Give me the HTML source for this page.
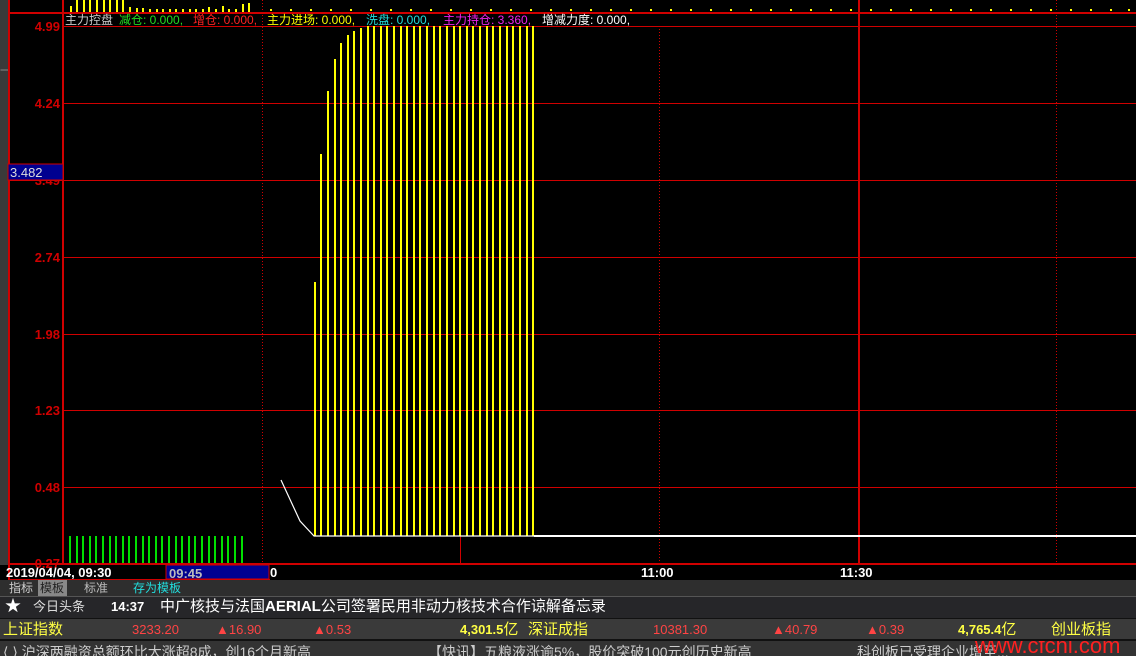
<!DOCTYPE html>
<html><head><meta charset="utf-8"><style>
*{margin:0;padding:0;box-sizing:border-box}
body{width:1136px;height:656px;background:#000;overflow:hidden;font-family:"Liberation Sans","Noto Sans CJK SC",sans-serif;position:relative}
.abs{position:absolute;white-space:nowrap}
.row{position:absolute;left:0;width:1136px}
</style></head><body>
<svg class="abs" style="left:0;top:0" width="1136" height="580" xmlns="http://www.w3.org/2000/svg">
<rect x="0" y="0" width="8" height="565" fill="#3a3a3a"/>
<line x1="0.5" y1="70" x2="8" y2="70" stroke="#888"/>
<g fill="#d00000" shape-rendering="crispEdges">
<rect x="8" y="12" width="1128" height="2"/>
<rect x="8" y="0" width="2" height="580"/>
<rect x="62" y="0" width="2" height="565"/>
<rect x="63" y="26" width="1073" height="1"/>
<rect x="63" y="103" width="1073" height="1"/>
<rect x="8" y="180" width="1128" height="1"/>
<rect x="63" y="257" width="1073" height="1"/>
<rect x="63" y="334" width="1073" height="1"/>
<rect x="63" y="410" width="1073" height="1"/>
<rect x="63" y="487" width="1073" height="1"/>
<rect x="8" y="563" width="1128" height="2"/>
<rect x="460" y="26" width="1" height="538"/>
<rect x="858" y="0" width="2" height="564"/>
<rect x="8" y="579" width="262" height="1"/>
</g>
<g stroke="#d00000" stroke-width="1" shape-rendering="crispEdges">
<line x1="262.5" y1="0" x2="262.5" y2="564" stroke-dasharray="1,2"/>
<line x1="659.5" y1="26" x2="659.5" y2="564" stroke-dasharray="1,2"/>
<line x1="1056.5" y1="0" x2="1056.5" y2="564" stroke-dasharray="1,2"/>
</g>
<g fill="#ffff00" shape-rendering="crispEdges">
<rect x="70" y="6" width="2" height="6"/><rect x="76" y="0" width="2" height="12"/><rect x="83" y="0" width="2" height="12"/><rect x="89" y="0" width="2" height="12"/><rect x="96" y="0" width="2" height="12"/><rect x="103" y="0" width="2" height="12"/><rect x="109" y="0" width="2" height="12"/><rect x="116" y="0" width="2" height="12"/><rect x="122" y="0" width="2" height="12"/>
<rect x="129" y="7" width="2" height="5"/><rect x="136" y="8" width="2" height="4"/><rect x="142" y="8" width="2" height="4"/><rect x="149" y="9" width="2" height="3"/><rect x="156" y="9" width="2" height="3"/><rect x="162" y="9" width="2" height="3"/><rect x="169" y="9" width="2" height="3"/><rect x="175" y="9" width="2" height="3"/><rect x="182" y="9" width="2" height="3"/><rect x="189" y="9" width="2" height="3"/><rect x="195" y="9" width="2" height="3"/><rect x="202" y="9" width="2" height="3"/><rect x="208" y="7" width="2" height="5"/><rect x="215" y="9" width="2" height="3"/><rect x="222" y="6" width="2" height="6"/><rect x="228" y="9" width="2" height="3"/><rect x="235" y="9" width="2" height="3"/><rect x="242" y="4" width="2" height="8"/><rect x="248" y="3" width="2" height="9"/>
</g>
<g fill="#ffff00">
<rect x="270" y="9" width="2" height="2"/><rect x="290" y="9" width="2" height="2"/><rect x="310" y="9" width="2" height="2"/><rect x="330" y="9" width="2" height="2"/><rect x="350" y="9" width="2" height="2"/><rect x="370" y="9" width="2" height="2"/><rect x="390" y="9" width="2" height="2"/><rect x="410" y="9" width="2" height="2"/><rect x="430" y="9" width="2" height="2"/><rect x="450" y="9" width="2" height="2"/><rect x="470" y="9" width="2" height="2"/><rect x="490" y="9" width="2" height="2"/><rect x="510" y="9" width="2" height="2"/><rect x="530" y="9" width="2" height="2"/><rect x="550" y="9" width="2" height="2"/><rect x="570" y="9" width="2" height="2"/><rect x="590" y="9" width="2" height="2"/><rect x="610" y="9" width="2" height="2"/><rect x="630" y="9" width="2" height="2"/><rect x="650" y="9" width="2" height="2"/><rect x="670" y="9" width="2" height="2"/><rect x="690" y="9" width="2" height="2"/><rect x="710" y="9" width="2" height="2"/><rect x="730" y="9" width="2" height="2"/><rect x="750" y="9" width="2" height="2"/><rect x="770" y="9" width="2" height="2"/><rect x="790" y="9" width="2" height="2"/><rect x="810" y="9" width="2" height="2"/><rect x="830" y="9" width="2" height="2"/><rect x="850" y="9" width="2" height="2"/><rect x="870" y="9" width="2" height="2"/><rect x="890" y="9" width="2" height="2"/><rect x="910" y="9" width="2" height="2"/><rect x="930" y="9" width="2" height="2"/><rect x="950" y="9" width="2" height="2"/><rect x="970" y="9" width="2" height="2"/><rect x="990" y="9" width="2" height="2"/><rect x="1010" y="9" width="2" height="2"/><rect x="1030" y="9" width="2" height="2"/><rect x="1050" y="9" width="2" height="2"/><rect x="1070" y="9" width="2" height="2"/><rect x="1090" y="9" width="2" height="2"/><rect x="1110" y="9" width="2" height="2"/><rect x="1128" y="9" width="2" height="2"/>
</g>
<g fill="#ffff00" shape-rendering="crispEdges">
<rect x="314" y="282" width="2" height="254"/>
<rect x="320" y="154" width="2" height="382"/>
<rect x="327" y="91" width="2" height="445"/>
<rect x="334" y="59" width="2" height="477"/>
<rect x="340" y="43" width="2" height="493"/>
<rect x="347" y="35" width="2" height="501"/>
<rect x="353" y="31" width="2" height="505"/>
<rect x="360" y="28" width="2" height="508"/>
<rect x="367" y="26" width="2" height="510"/><rect x="373" y="26" width="2" height="510"/><rect x="380" y="26" width="2" height="510"/><rect x="386" y="26" width="2" height="510"/><rect x="393" y="26" width="2" height="510"/><rect x="400" y="26" width="2" height="510"/><rect x="406" y="26" width="2" height="510"/><rect x="413" y="26" width="2" height="510"/><rect x="419" y="26" width="2" height="510"/><rect x="426" y="26" width="2" height="510"/><rect x="433" y="26" width="2" height="510"/><rect x="439" y="26" width="2" height="510"/><rect x="446" y="26" width="2" height="510"/><rect x="453" y="26" width="2" height="510"/><rect x="459" y="26" width="2" height="510"/><rect x="466" y="26" width="2" height="510"/><rect x="472" y="26" width="2" height="510"/><rect x="479" y="26" width="2" height="510"/><rect x="486" y="26" width="2" height="510"/><rect x="492" y="26" width="2" height="510"/><rect x="499" y="26" width="2" height="510"/><rect x="506" y="26" width="2" height="510"/><rect x="512" y="26" width="2" height="510"/><rect x="519" y="26" width="2" height="510"/><rect x="526" y="26" width="2" height="510"/><rect x="532" y="26" width="2" height="510"/>
</g>
<g fill="#00e000" shape-rendering="crispEdges">
<rect x="69" y="536" width="2" height="27"/><rect x="76" y="536" width="2" height="27"/><rect x="82" y="536" width="2" height="27"/><rect x="89" y="536" width="2" height="27"/><rect x="95" y="536" width="2" height="27"/><rect x="102" y="536" width="2" height="27"/><rect x="109" y="536" width="2" height="27"/><rect x="115" y="536" width="2" height="27"/><rect x="122" y="536" width="2" height="27"/><rect x="128" y="536" width="2" height="27"/><rect x="135" y="536" width="2" height="27"/><rect x="142" y="536" width="2" height="27"/><rect x="148" y="536" width="2" height="27"/><rect x="155" y="536" width="2" height="27"/><rect x="161" y="536" width="2" height="27"/><rect x="168" y="536" width="2" height="27"/><rect x="175" y="536" width="2" height="27"/><rect x="181" y="536" width="2" height="27"/><rect x="188" y="536" width="2" height="27"/><rect x="194" y="536" width="2" height="27"/><rect x="201" y="536" width="2" height="27"/><rect x="208" y="536" width="2" height="27"/><rect x="214" y="536" width="2" height="27"/><rect x="221" y="536" width="2" height="27"/><rect x="227" y="536" width="2" height="27"/><rect x="234" y="536" width="2" height="27"/><rect x="241" y="536" width="2" height="27"/>
</g>
<polyline points="281,480 300,521 314,536 1136,536" fill="none" stroke="#fff" stroke-width="1.2"/>
<rect x="534" y="535" width="602" height="2" fill="#fff"/>
<g font-family="Liberation Sans, sans-serif" font-size="13" fill="#d00000" text-anchor="end" font-weight="bold">
<text x="60" y="31">4.99</text><text x="60" y="108">4.24</text><text x="60" y="185">3.49</text><text x="60" y="262">2.74</text><text x="60" y="339">1.98</text><text x="60" y="415">1.23</text><text x="60" y="492">0.48</text><text x="60" y="568">0.27</text>
</g>
<rect x="8" y="164" width="55" height="16" fill="#000090" stroke="#d00000"/>
<text x="10" y="177" font-family="Liberation Sans, sans-serif" font-size="13" fill="#ddd">3.482</text>
<g font-family="Liberation Sans, Noto Sans CJK SC, sans-serif" font-size="12">
<text x="65" y="24" fill="#ccc">主力控盘</text>
<text x="119" y="24" fill="#22dd22">减仓: 0.000,</text>
<text x="193" y="24" fill="#ff2222">增仓: 0.000,</text>
<text x="267" y="24" fill="#ffff00">主力进场: 0.000,</text>
<text x="366" y="24" fill="#22dddd">洗盘: 0.000,</text>
<text x="443" y="24" fill="#ee22ee">主力持仓: 3.360,</text>
<text x="542" y="24" fill="#fff">增减力度: 0.000,</text>
</g>
<rect x="166" y="565" width="103" height="14" fill="#000090" stroke="#d00000"/>
<g font-family="Liberation Sans, sans-serif" font-size="13" font-weight="bold">
<text x="6" y="577" fill="#fff">2019/04/04, 09:30</text>
<text x="169" y="578" fill="#bbb">09:45</text>
<text x="270" y="577" fill="#fff">0</text>
<text x="641" y="577" fill="#fff">11:00</text>
<text x="840" y="577" fill="#fff">11:30</text>
</g>
</svg>
<div class="row" style="top:580px;height:16px;background:#2e2e2e;font-size:12px;line-height:16px">
<span class="abs" style="left:9px;color:#ccc">指标</span>
<span class="abs" style="left:38px;width:29px;background:#888;color:#222;padding-left:2px">模板</span>
<span class="abs" style="left:84px;color:#bbb">标准</span>
<span class="abs" style="left:133px;color:#22dddd">存为模板</span>
</div>
<div class="row" style="top:596px;height:22px;background:#262629;border-top:1px solid #555;font-size:15px;line-height:20px">
<span class="abs" style="left:5px;color:#fff;font-size:16px">★</span>
<span class="abs" style="left:33px;color:#ddd;font-size:13px">今日头条</span>
<span class="abs" style="left:111px;color:#fff;font-size:13px;font-weight:bold">14:37</span>
<span class="abs" style="left:160px;color:#fff">中广核技与法国<b>AERIAL</b>公司签署民用非动力核技术合作谅解备忘录</span>
</div>
<div class="row" style="top:618px;height:21px;background:#3a3a3a;border-top:1px solid #111;font-size:15px;line-height:21px">
<span class="abs" style="left:3px;color:#ffff44">上证指数</span>
<span class="abs" style="left:132px;color:#ff4444;font-size:13px">3233.20</span>
<span class="abs" style="left:216px;color:#ff4444;font-size:13px">▲16.90</span>
<span class="abs" style="left:313px;color:#ff4444;font-size:13px">▲0.53</span>
<span class="abs" style="left:460px;color:#ffff44;font-size:13px;font-weight:bold">4,301.5<span style="font-weight:normal;font-size:15px">亿</span></span>
<span class="abs" style="left:528px;color:#ffff44">深证成指</span>
<span class="abs" style="left:653px;color:#ff4444;font-size:13px">10381.30</span>
<span class="abs" style="left:772px;color:#ff4444;font-size:13px">▲40.79</span>
<span class="abs" style="left:866px;color:#ff4444;font-size:13px">▲0.39</span>
<span class="abs" style="left:958px;color:#ffff44;font-size:13px;font-weight:bold">4,765.4<span style="font-weight:normal;font-size:15px">亿</span></span>
<span class="abs" style="left:1051px;color:#ffff44">创业板指</span>
</div>
<div class="row" style="top:639px;height:17px;background:#333;border-top:2px solid #111;font-size:14px;line-height:22px;overflow:hidden">
<span class="abs" style="left:3px;color:#ccc">⟨ ⟩ 沪深两融资总额环比大涨超8成，创16个月新高</span>
<span class="abs" style="left:428px;color:#ccc">【快讯】五粮液涨逾5%，股价突破100元创历史新高</span>
<span class="abs" style="left:857px;color:#ccc">科创板已受理企业增至...</span>
<span class="abs" style="left:975px;top:-6px;color:#ff2020;font-size:22px">www.cfchi.com</span>
</div>
</body></html>
